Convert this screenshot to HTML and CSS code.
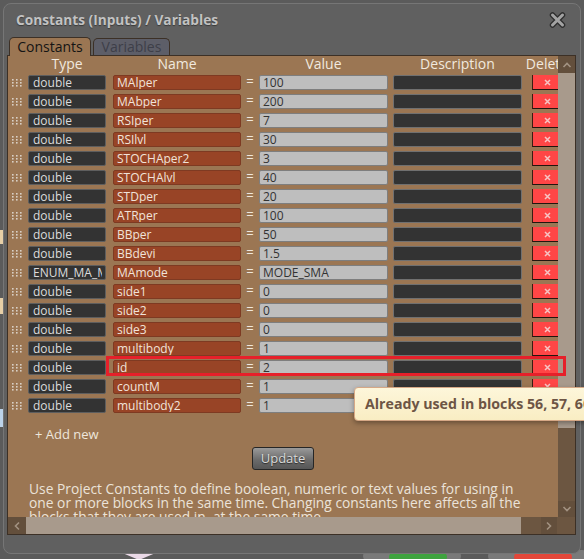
FILE: index.html
```html
<!DOCTYPE html>
<html>
<head>
<meta charset="utf-8">
<link rel="stylesheet" href="styles.css">
</head>
<body>
<span class="bg-node bg-spike"></span>
<span class="bg-node bg-pill1"></span>
<span class="bg-node bg-green"></span>
<span class="bg-node bg-pill2"></span>
<span class="bg-node bg-red"></span>
<span class="bg-node bg-l1"></span>
<span class="bg-node bg-l2"></span>
<span class="bg-node bg-l3"></span>

<div class="dialog">
  <div class="titlebar">
    <span class="title">Constants (Inputs) / Variables</span>
    <svg class="close" width="17" height="16" viewBox="0 0 17 16">
      <path d="M3.5 3 L13.5 13 M13.5 3 L3.5 13" stroke="#2e2e2e" stroke-width="5.5" stroke-linecap="round"/>
      <path d="M3.5 3 L13.5 13 M13.5 3 L3.5 13" stroke="#a3a3a3" stroke-width="3" stroke-linecap="round"/>
    </svg>
  </div>
  <div class="tabs">
    <div class="tab tab-active">Constants</div>
    <div class="tab tab-idle">Variables</div>
  </div>
  <div class="panel">
    <div class="viewport">
      <div class="content">
        <div class="row head">
          <span class="c-handle"></span>
          <span class="c-type">Type</span>
          <span class="c-name">Name</span>
          <span class="c-eq"></span>
          <span class="c-val">Value</span>
          <span class="c-desc">Description</span>
          <span class="c-del">Delete</span>
        </div>
        <div id="rows"></div>
        <div class="addnew">+ Add new</div>
        <div class="update-wrap"><button class="update">Update</button></div>
        <p class="help">Use Project Constants to define boolean, numeric or text values for using in one or more blocks in the same time. Changing constants here affects all the blocks that they are used in, at the same time.</p>
      </div>
    </div>
    <div class="vscroll">
      <div class="sb-btn sb-up"><svg width="10" height="8" viewBox="0 0 10 8"><path d="M1.5 6 L5 2.5 L8.5 6" fill="none" stroke="#a29282" stroke-width="1.6"/></svg></div>
      <div class="v-thumb"></div>
      <div class="v-track"></div>
      <div class="sb-btn sb-down"><svg width="10" height="8" viewBox="0 0 10 8"><path d="M1.5 2 L5 5.5 L8.5 2" fill="none" stroke="#a29282" stroke-width="1.6"/></svg></div>
    </div>
    <div class="hscroll">
      <div class="sb-btn sb-left"><svg width="8" height="10" viewBox="0 0 8 10"><path d="M6 1.5 L2.5 5 L6 8.5" fill="none" stroke="#a29282" stroke-width="1.6"/></svg></div>
      <div class="h-thumb"></div>
      <div class="h-track"></div>
      <div class="sb-btn sb-right"><svg width="8" height="10" viewBox="0 0 8 10"><path d="M2 1.5 L5.5 5 L2 8.5" fill="none" stroke="#a29282" stroke-width="1.6"/></svg></div>
    </div>
    <div class="corner"></div>
  </div>
</div>

<div class="highlight"></div>
<div class="tooltip">Already used in blocks 56, 57, 60, 61</div>

<script src="app.js"></script>
</body>
</html>
```

FILE: app.js
```js
const data = [
  ["double","MAlper","100"],
  ["double","MAbper","200"],
  ["double","RSIper","7"],
  ["double","RSIlvl","30"],
  ["double","STOCHAper2","3"],
  ["double","STOCHAlvl","40"],
  ["double","STDper","20"],
  ["double","ATRper","100"],
  ["double","BBper","50"],
  ["double","BBdevi","1.5"],
  ["ENUM_MA_METHOD","MAmode","MODE_SMA"],
  ["double","side1","0"],
  ["double","side2","0"],
  ["double","side3","0"],
  ["double","multibody","1"],
  ["double","id","2"],
  ["double","countM","1"],
  ["double","multibody2","1"]
];
const handle = '<svg width="10" height="8" viewBox="0 0 10 8">' +
  [0,4,8].map(x => [0,3,6].map(y => `<rect x="${x}" y="${y}" width="1.6" height="1.6" fill="#d9d0c6"/>`).join('')).join('') +
  '</svg>';
const del = '<svg width="7" height="7" viewBox="0 0 7 7"><path d="M1 1 L6 6 M6 1 L1 6" stroke="#f7c4c4" stroke-width="1.5"/></svg>';
const rows = document.getElementById('rows');
rows.innerHTML = data.map(([t,n,v]) =>
  `<div class="row item">
    <span class="c-handle">${handle}</span>
    <span class="c-type box box-type"><span class="clip">${t}</span></span>
    <span class="c-name box box-name">${n}</span>
    <span class="c-eq">=</span>
    <span class="c-val box box-val">${v}</span>
    <span class="c-desc box box-desc"></span>
    <span class="c-del box-del">${del}</span>
  </div>`).join('');
```

FILE: styles.css
```css
html, body {
  margin: 0;
}
body {
  width: 584px;
  height: 559px;
  overflow: hidden;
  position: relative;
  background: #5b5b5b;
  padding: 3px 0 0 3px;
  box-sizing: border-box;
  font-family: "Open Sans", "Noto Sans", sans-serif;
}

/* background canvas bits */
.bg-node { position: absolute; display: block; }
.bg-spike { left: 120px; top: 552px; width: 38px; height: 8px; background: #e9d8e6; clip-path: polygon(0 0, 100% 0, 50% 100%); }
.bg-pill1 { left: 363px; top: 550px; width: 98px; height: 12px; background: #7a7a7a; border-radius: 6px; }
.bg-green { left: 389px; top: 552px; width: 58px; height: 10px; background: #3fa33f; border-radius: 5px; }
.bg-pill2 { left: 488px; top: 550px; width: 100px; height: 12px; background: #7a7a7a; border-radius: 6px; }
.bg-red { left: 514px; top: 552px; width: 58px; height: 10px; background: #e2473a; border-radius: 5px; }
.bg-l1 { left: 0; top: 230px; width: 3px; height: 14px; background: #e7cfa6; }
.bg-l2 { left: 0; top: 298px; width: 3px; height: 16px; background: #e7cfa6; }
.bg-l3 { left: 0; top: 409px; width: 3px; height: 18px; background: #bcd3ea; }

.dialog {
  position: relative;
  width: 578px;
  height: 551px;
  box-sizing: border-box;
  background: #606060;
  border: 1px solid #767676;
  border-radius: 8px;
  display: flex;
  flex-direction: column;
}

.titlebar {
  height: 33px;
  display: flex;
  align-items: center;
  justify-content: space-between;
  padding: 0 14px 0 12px;
}
.title {
  font-size: 13.7px;
  font-weight: 700;
  color: #c2c2c2;
  text-shadow: 0 1px 1px #3a3a3a;
  margin-top: -2px;
}
.close { display: block; margin-top: -1px; }

.tabs {
  display: flex;
  align-items: flex-end;
  gap: 2px;
  height: 18px;
  padding-left: 5px;
}
.tab {
  box-sizing: border-box;
  border: 1px solid #3c3026;
  border-bottom: none;
  border-radius: 5px 5px 0 0;
  font-size: 14px;
  text-align: center;
}
.tab-active {
  width: 82px;
  height: 19px;
  line-height: 17px;
  margin-bottom: -1px;
  background: #9b7653;
  color: #141414;
  position: relative;
  z-index: 1;
}
.tab-idle {
  width: 77px;
  height: 17px;
  line-height: 16px;
  background: #5d5e68;
  color: #3e3f49;
}

.panel {
  margin-left: 3px;
  width: 569px;
  height: 480px;
  box-sizing: border-box;
  border: 1px solid #3c3026;
  background: #9b7653;
  display: grid;
  grid-template-columns: 550px 17px;
  grid-template-rows: 461px 17px;
}

.viewport { overflow: hidden; }
.content { width: 572px; }

.row {
  display: flex;
  align-items: stretch;
}
.head {
  height: 19px;
  font-size: 14px;
  line-height: 15px;
  color: #f1e9df;
  text-align: center;
}
.head span { white-space: nowrap; }
.item {
  height: 15px;
  margin-bottom: 4px;
  font-size: 12px;
  line-height: 13px;
}
.c-handle { width: 20px; flex: none; display: flex; align-items: center; padding-left: 4px; box-sizing: border-box; }
.c-handle svg { display: block; }
.c-type { width: 78px; flex: none; }
.c-name { width: 128px; flex: none; margin-left: 7px; }
.c-eq { width: 18px; flex: none; text-align: center; color: #efe7dd; font-size: 13px; }
.c-val { width: 129px; flex: none; }
.c-desc { width: 129px; flex: none; margin-left: 5px; }
.c-del { width: 30px; flex: none; margin-left: 10px; display: flex; justify-content: center; }

.box {
  box-sizing: border-box;
  border: 1px solid;
  border-radius: 2px;
  padding: 0 3px;
  white-space: nowrap;
  overflow: hidden;
}
.clip { display: block; overflow: hidden; white-space: nowrap; }
.box-type { background: #333333; border-color: #5e5e5e; color: #dcdcdc; padding-left: 4px; }
.box-name { background: #984426; border-color: #7e3a22; color: #f1e3da; }
.box-val { background: #bebebe; border-color: #7e7e7e; color: #333; }
.box-desc { background: #333333; border-color: #707070; }
.box-del {
  box-sizing: border-box;
  background: #ff4646;
  border-left: 1px solid #3a1c12;
  border-bottom: 1px solid #22150e;
  align-items: center;
}
.box-del svg { display: block; }

.addnew {
  margin-top: 12px;
  height: 18px;
  line-height: 18px;
  padding-left: 27px;
  font-size: 13px;
  color: #eee6dc;
}

.update-wrap {
  width: 550px;
  margin-top: 4px;
  display: flex;
  justify-content: center;
}
.update {
  width: 62px;
  height: 23px;
  box-sizing: border-box;
  border: 1px solid #262626;
  border-radius: 3px;
  background: linear-gradient(#9a9a9a, #6c6c6c 55%, #565656);
  color: #dadada;
  text-shadow: 0 1px 1px #2a2a2a;
  font-family: "Open Sans", "Noto Sans", sans-serif;
  font-size: 13px;
  line-height: 19px;
  padding: 0;
}

.help {
  margin: 12px 0 0 0;
  padding-left: 21px;
  width: 508px;
  font-size: 13.8px;
  line-height: 14px;
  color: #ebe3d9;
}

/* scrollbars */
.vscroll {
  display: flex;
  flex-direction: column;
  background: #6c5641;
}
.sb-btn {
  display: flex;
  align-items: center;
  justify-content: center;
  background: #634f3c;
  flex: none;
}
.sb-btn svg { display: block; }
.sb-up { height: 17px; }
.v-thumb { height: 355px; background: #a89a8c; flex: none; }
.v-track { flex: 1; }
.sb-down { height: 16px; }

.hscroll {
  display: flex;
  background: #6c5641;
}
.sb-left { width: 18px; }
.h-thumb { width: 495px; background: #a89a8c; flex: none; }
.h-track { flex: 1; }
.sb-right { width: 16px; margin-right: 1px; }
.corner { background: #6c5641; }

/* overlays */
.highlight {
  position: absolute;
  left: 106px;
  top: 356px;
  width: 460px;
  height: 20px;
  box-sizing: border-box;
  border: 3px solid #e6202a;
}
.tooltip {
  position: absolute;
  left: 354px;
  top: 387px;
  width: 260px;
  height: 34px;
  box-sizing: border-box;
  border: 1px solid #d6a886;
  border-radius: 4px;
  background: linear-gradient(#fdf6da, #f9edc3);
  box-shadow: 0 2px 5px rgba(0,0,0,0.35);
  padding-left: 10px;
  line-height: 32px;
  font-size: 14.2px;
  font-weight: 700;
  color: #6d5545;
  white-space: nowrap;
}
```
